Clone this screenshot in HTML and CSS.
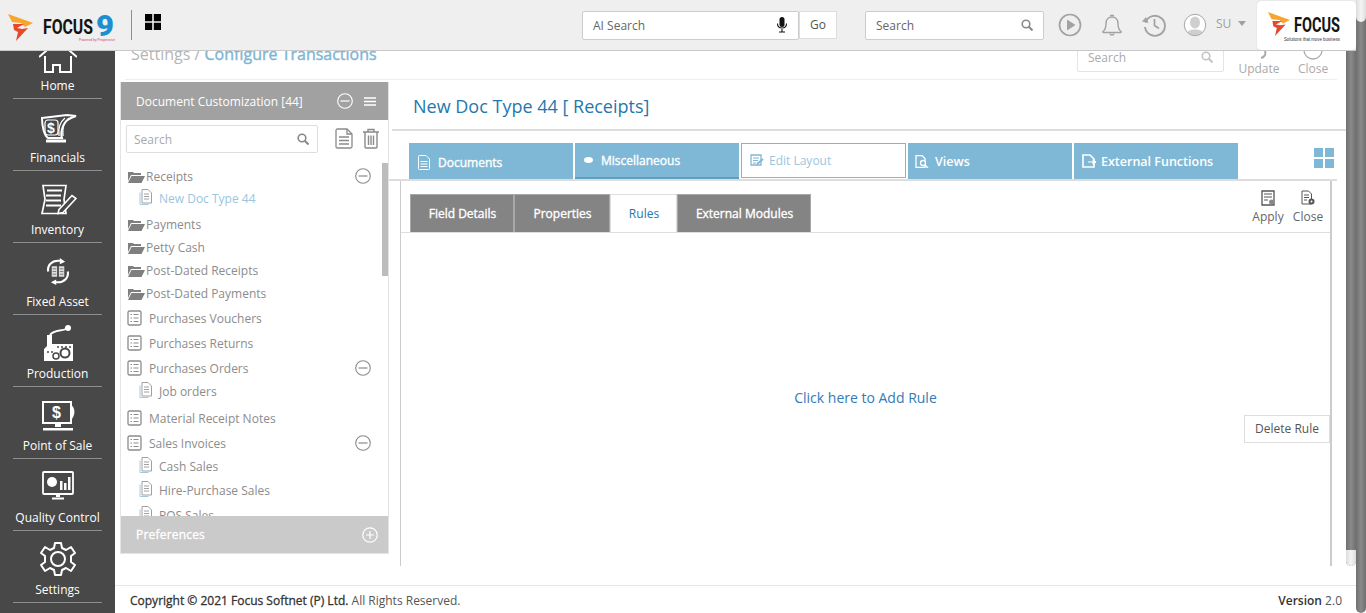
FILE: index.html
```html
<!DOCTYPE html>
<html lang="en">
<head>
<meta charset="utf-8">
<title>Configure Transactions</title>
<link rel="stylesheet" href="styles.css">
</head>
<body>
<svg class="defs" width="0" height="0" aria-hidden="true">
  <symbol id="mark" viewBox="0 0 25 27">
    <path fill="#f7a52c" d="M0 0 L25 9 L17 13 L13 9 L4 8 Z"/>
    <path fill="#e8472a" d="M5 10 L16 10 L9 14 L14 15 L20 14 L8 27 L10 18 L6 16 Z"/>
  </symbol>
  <symbol id="folder" viewBox="0 0 18 13">
    <path fill="#7f7f7f" d="M1 2 L6 2 L7 3 L14 3 L14 5 L4 5 L1 11 Z"/>
    <path fill="#7f7f7f" d="M4.500 6 L18 6 L14.500 13 L1 13 Z"/>
  </symbol>
  <symbol id="list" viewBox="0 0 15 16">
    <rect x="1" y="1" width="13" height="14" rx="1.500" fill="none" stroke="#8c8c8c" stroke-width="1.300"/>
    <path stroke="#8c8c8c" stroke-width="1.100" d="M3.500 4.500h1.500M6.500 4.500h5M3.500 8h1.500M6.500 8h5M3.500 11.500h1.500M6.500 11.500h5"/>
  </symbol>
  <symbol id="page" viewBox="0 0 14 16">
    <path fill="none" stroke="#a8c8dc" d="M1 3.500V15.500H9.500"/>
    <path fill="none" stroke="#a0a0a0" d="M3 .500H9L12.500 4V14H3Z"/>
    <path stroke="#a0a0a0" d="M5 5h5M5 7.500h5M5 10h5"/>
  </symbol>
  <symbol id="minus" viewBox="0 0 16 16">
    <circle cx="8" cy="8" r="7.300" fill="none" stroke="currentColor" stroke-width="1.100"/>
    <path stroke="currentColor" stroke-width="1.200" d="M3.500 8h9"/>
  </symbol>
  <symbol id="lens" viewBox="0 0 12 12">
    <circle cx="5" cy="5" r="3.800" fill="none" stroke="currentColor" stroke-width="1.600"/>
    <path stroke="currentColor" stroke-width="2" d="M7.800 7.800L11.500 11.500"/>
  </symbol>
</svg>

<div class="page">
  <div class="app">
    <header class="topbar">
      <div class="brand">
        <svg class="brand-mark"><use href="#mark"/></svg>
        <svg class="brand-word" viewBox="0 0 74 30" width="74" height="30">
          <text class="word" x="0" y="22" textLength="50" lengthAdjust="spacingAndGlyphs">FOCUS</text>
          <text class="nine" x="53" y="24" textLength="18" lengthAdjust="spacingAndGlyphs">9</text>
          <text class="tiny" x="36" y="29" textLength="36" lengthAdjust="spacingAndGlyphs">Powered by Progressive</text>
        </svg>
      </div>
      <span class="brand-rule"></span>
      <svg class="apps" viewBox="0 0 16 16" width="16" height="16"><path fill="#000" d="M0 0h7.200v7.200H0zM8.800 0H16v7.200H8.800zM0 8.800h7.200V16H0zM8.800 8.800H16V16H8.800z"/></svg>
      <div class="top-search">
        <div class="ai-box">
          <span>AI Search</span>
          <svg viewBox="0 0 12 16" width="12" height="16"><rect x="3.500" y="0" width="5" height="10" rx="2.500" fill="#111"/><path d="M1.500 6.500c0 6 9 6 9 0M6 12v2.500M3 15h6" fill="none" stroke="#111" stroke-width="1.100"/></svg>
        </div>
        <button class="go">Go</button>
      </div>
      <div class="main-search">
        <span>Search</span>
        <svg class="ic-lens"><use href="#lens"/></svg>
      </div>
      <div class="top-icons">
        <svg viewBox="0 0 24 24" width="24" height="24"><circle cx="12" cy="12" r="10.500" fill="none" stroke="#a2a2a2" stroke-width="1.700"/><path d="M9 6.500L17.500 12L9 17.500Z" fill="#a2a2a2"/></svg>
        <svg viewBox="0 0 24 24" width="24" height="24"><path d="M3 18.500c2.500-2 3-4 3-8c0-4 2.500-6.500 6-6.500s6 2.500 6 6.500c0 4 .5 6 3 8c.5.500 0 1-.5 1H3.500c-.5 0-1-.5-.5-1Z" fill="none" stroke="#a2a2a2" stroke-width="1.400"/><path d="M10 2.500h4M10 20.500c.5 2 3.500 2 4 0" fill="none" stroke="#a2a2a2" stroke-width="1.400"/></svg>
        <svg viewBox="0 0 24 24" width="24" height="24"><path d="M3.500 9.500A10 10 0 1 1 3 14" fill="none" stroke="#a2a2a2" stroke-width="1.900"/><path d="M0 8.500L6.500 10L4 4Z" fill="#a2a2a2"/><path d="M12.500 6v6.500l4.500 3" fill="none" stroke="#a2a2a2" stroke-width="1.700"/></svg>
        <svg class="avatar" viewBox="0 0 24 24" width="24" height="24"><defs><clipPath id="av"><circle cx="12" cy="12" r="10.500"/></clipPath></defs><circle cx="12" cy="12" r="10.500" fill="#fff"/><g clip-path="url(#av)" fill="#cfcfcf"><ellipse cx="12" cy="9.500" rx="5" ry="6"/><path d="M3 24c0-6 4-7.500 9-7.500s9 1.500 9 7.500Z"/></g><circle cx="12" cy="12" r="10.700" fill="none" stroke="#a8a8a8"/></svg>
        <span class="user">SU</span><span class="caret"></span>
      </div>
      <div class="top-logo">
        <svg class="logo-mark"><use href="#mark"/></svg>
        <svg class="logo-word" viewBox="0 0 50 26" width="50" height="26">
          <text class="word word-lg" x="3" y="15" textLength="46" lengthAdjust="spacingAndGlyphs">FOCUS</text>
          <text class="tag" x="-7" y="24" textLength="56" lengthAdjust="spacingAndGlyphs">Solutions that move business</text>
        </svg>
      </div>
    </header>

    <div class="below">
      <nav class="sidebar">
        <a class="nav-item nav-first">
          <svg viewBox="0 0 38 38" width="38" height="38"><path d="M0 22L19 5.700L38 22" fill="none" stroke="#fff" stroke-width="2"/><path d="M6 21V37H14V30H21V37H32V21" fill="none" stroke="#fff" stroke-width="2"/></svg>
          <span>Home</span>
        </a>
        <a class="nav-item">
          <svg viewBox="0 0 38 30" width="38" height="30"><path d="M3 5L28 2L37 3C30 5 26 8 24 13C22 18 22 22 23 25H9C5 22 3 13 3 5Z" fill="#484848" stroke="#fff" stroke-width="2"/><path d="M7 28H27" stroke="#fff" stroke-width="3"/><path d="M26 5C21 9 19 15 20 23M30 5C25 9 23 15 24 23" fill="none" stroke="#fff" stroke-width="1.300"/><text class="dollar" x="8" y="20">$</text><rect x="6" y="7" width="13" height="15" rx="3" fill="none" stroke="#fff" stroke-width="1.200"/></svg>
          <span>Financials</span>
        </a>
        <a class="nav-item">
          <svg viewBox="0 0 38 30" width="38" height="31"><path d="M4 1H27L25 15L27 29H3L6 15Z" fill="none" stroke="#fff" stroke-width="1.700"/><path d="M8 6H23M7 11H22M7 16H22M7 21H22" stroke="#fff" stroke-width="2.200"/><path d="M20 25L33 11L37 14L24 28L19 29Z" fill="#484848" stroke="#fff" stroke-width="1.600"/></svg>
          <span>Inventory</span>
        </a>
        <a class="nav-item">
          <svg class="mb8" viewBox="0 0 38 30" width="34" height="27"><path d="M8 15C7 8 12 3 19 3L22 3M30 15C31 22 26 27 19 27L16 27" fill="none" stroke="#fff" stroke-width="2.400"/><path d="M21 0L27 4L21 7ZM17 24L11 27L17 30Z" fill="#fff"/><path d="M12 9h6v12h-6zM20 9h6v12h-6z" fill="#ddd"/><path d="M13 12h4M13 15h4M13 18h4M21 12h4M21 15h4M21 18h4" stroke="#777"/></svg>
          <span>Fixed Asset</span>
        </a>
        <a class="nav-item">
          <svg class="mb4" viewBox="0 0 34 36" width="34" height="36"><path d="M9 10C14 4 20 7 26 3.500" fill="none" stroke="#fff" stroke-width="2"/><circle cx="27" cy="3" r="3" fill="#fff"/><path d="M3 36V24L6 21V10H11V19H32V36Z" fill="#fff"/><path d="M16 22h2M20 22h2M24 22h2M28 22h2M6 27h2M10 27h2" stroke="#484848" stroke-width="1.500"/><circle cx="24" cy="28" r="4.500" fill="#fff" stroke="#484848" stroke-width="2"/><circle cx="15" cy="31" r="3" fill="#fff" stroke="#484848" stroke-width="1.500"/></svg>
          <span>Production</span>
        </a>
        <a class="nav-item">
          <svg viewBox="0 0 38 30" width="38" height="30"><rect x="4" y="1" width="28" height="21" fill="#484848" stroke="#fff" stroke-width="2"/><path d="M32 4C36 6 37 14 32 19Z" fill="#fff"/><path d="M16 23h6v3h-6zM4 27h30v2.500H4z" fill="#fff"/><text class="dollar dollar-pos" x="13" y="17">$</text></svg>
          <span>Point of Sale</span>
        </a>
        <a class="nav-item">
          <svg class="mb8" viewBox="0 0 38 30" width="38" height="30"><rect x="4" y="1" width="30" height="22" rx="1" fill="#484848" stroke="#fff" stroke-width="1.800"/><circle cx="13" cy="11" r="5" fill="#fff"/><path d="M21 10h2.500v9H21zM25 12h2.500v7H25zM29 6h2.500v13H29z" fill="#fff"/><path d="M17 24h4v2h-4zM13 26.500h12v2H13z" fill="#fff"/></svg>
          <span>Quality Control</span>
        </a>
        <a class="nav-item">
          <svg class="mb4" viewBox="0 0 38 36" width="38" height="36"><path d="M16 2H22L23 7L27 9L32 6L36 12L32 15V21L36 24L32 30L27 27L23 29L22 34H16L15 29L11 27L6 30L2 24L6 21V15L2 12L6 6L11 9L15 7Z" fill="none" stroke="#fff" stroke-width="2" stroke-linejoin="round"/><circle cx="19" cy="18" r="7" fill="none" stroke="#fff" stroke-width="2"/></svg>
          <span>Settings</span>
        </a>
      </nav>

      <div class="rightcol">
        <div class="workarea">
          <main class="main">
            <div class="crumbs">
              <h1 class="crumb-title">Settings / <b>Configure Transactions</b></h1>
              <div class="crumb-tools">
                <div class="crumb-search"><span>Search</span><svg class="ic-lens light"><use href="#lens"/></svg></div>
                <div class="crumb-btn crumb-update"><svg viewBox="0 0 20 20" width="20" height="20"><path d="M12 18C16 17 17 14 16 11" fill="none" stroke="#aaa" stroke-width="2"/></svg><span>Update</span></div>
                <div class="crumb-btn"><svg viewBox="0 0 20 20" width="20" height="20"><circle cx="10" cy="10" r="9" fill="none" stroke="#aaa" stroke-width="1.300"/></svg><span>Close</span></div>
              </div>
            </div>

            <div class="split">
              <aside class="panel">
                <div class="panel-head">
                  <span>Document Customization [44]</span>
                  <svg class="ph-minus"><use href="#minus"/></svg>
                  <svg class="ph-menu" viewBox="0 0 12 9" width="12" height="9"><path stroke="#fff" stroke-width="1.500" d="M0 1h12M0 4.500h12M0 8h12"/></svg>
                </div>
                <div class="panel-search">
                  <div class="ps-box"><span>Search</span><svg class="ic-lens"><use href="#lens"/></svg></div>
                  <svg class="ps-doc" viewBox="0 0 18 21" width="18" height="21"><path d="M1 2.500Q1 1 2.500 1H12L17 6V18.500Q17 20 15.500 20H2.500Q1 20 1 18.500Z" fill="none" stroke="#8a8a8a" stroke-width="1.300"/><path d="M4 9h10M4 12.500h10M4 16h10M12 1v5h5" fill="none" stroke="#8a8a8a" stroke-width="1.300"/></svg>
                  <svg class="ps-trash" viewBox="0 0 18 21" width="18" height="21"><path d="M1 4h16M6 4V1.500h6V4M3 4V19Q3 20 4 20H14Q15 20 15 19V4M6.500 7.500V17M9 7.500V17M11.500 7.500V17" fill="none" stroke="#8a8a8a" stroke-width="1.400"/></svg>
                </div>
                <div class="tree">
                  <div class="tree-row folder"><svg class="i-folder"><use href="#folder"/></svg><span>Receipts</span><svg class="tree-minus"><use href="#minus"/></svg></div>
                  <div class="tree-row child active"><svg class="i-page"><use href="#page"/></svg><span>New Doc Type 44</span></div>
                  <div class="tree-row folder gap"><svg class="i-folder"><use href="#folder"/></svg><span>Payments</span></div>
                  <div class="tree-row folder"><svg class="i-folder"><use href="#folder"/></svg><span>Petty Cash</span></div>
                  <div class="tree-row folder"><svg class="i-folder"><use href="#folder"/></svg><span>Post-Dated Receipts</span></div>
                  <div class="tree-row folder"><svg class="i-folder"><use href="#folder"/></svg><span>Post-Dated Payments</span></div>
                  <div class="tree-row doc doc-first"><svg class="i-list"><use href="#list"/></svg><span>Purchases Vouchers</span></div>
                  <div class="tree-row doc"><svg class="i-list"><use href="#list"/></svg><span>Purchases Returns</span></div>
                  <div class="tree-row doc"><svg class="i-list"><use href="#list"/></svg><span>Purchases Orders</span><svg class="tree-minus"><use href="#minus"/></svg></div>
                  <div class="tree-row child"><svg class="i-page"><use href="#page"/></svg><span>Job orders</span></div>
                  <div class="tree-row doc gap"><svg class="i-list"><use href="#list"/></svg><span>Material Receipt Notes</span></div>
                  <div class="tree-row doc"><svg class="i-list"><use href="#list"/></svg><span>Sales Invoices</span><svg class="tree-minus"><use href="#minus"/></svg></div>
                  <div class="tree-row child"><svg class="i-page"><use href="#page"/></svg><span>Cash Sales</span></div>
                  <div class="tree-row child tall-child"><svg class="i-page"><use href="#page"/></svg><span>Hire-Purchase Sales</span></div>
                  <div class="tree-row child tall-child"><svg class="i-page"><use href="#page"/></svg><span>POS Sales</span></div>
                  <span class="tree-thumb"></span>
                </div>
                <div class="panel-foot">
                  <span>Preferences</span>
                  <svg viewBox="0 0 16 16" width="16" height="16"><circle cx="8" cy="8" r="7.200" fill="none" stroke="#fff" stroke-width="1.200"/><path stroke="#fff" stroke-width="1.200" d="M4 8h8M8 4v8"/></svg>
                </div>
              </aside>

              <section class="editor">
                <h2 class="doc-title">New Doc Type 44 [ Receipts]</h2>
                <div class="tabs">
                  <a class="tab tab-doc"><svg viewBox="0 0 12 15" width="12" height="15"><path d="M.5 1.500Q.5.500 1.500.500H8L11.500 4V13.500Q11.500 14.500 10.500 14.500H1.500Q.5 14.500.5 13.500Z" fill="none" stroke="#fff"/><path d="M2.500 6.500h7M2.500 9h7M2.500 11.500h7" stroke="#fff"/></svg>Documents</a>
                  <a class="tab tab-misc"><svg viewBox="0 0 9 6" width="9" height="6"><ellipse cx="4.500" cy="3" rx="4.500" ry="3" fill="#fff"/></svg>Miscellaneous</a>
                  <a class="tab tab-on"><svg viewBox="0 0 14 13" width="14" height="13"><path d="M1 1h10v10H1z" fill="none" stroke="#7fb8d6" stroke-width="1.300"/><path d="M3 4h6M3 6.500h5M3 9h3" stroke="#7fb8d6"/><path d="M7 10l6-5" stroke="#7fb8d6" stroke-width="2"/></svg>Edit Layout</a>
                  <a class="tab tab-views"><svg viewBox="0 0 14 13" width="14" height="13"><path d="M1 .500H7L10 3.500V12.500H1Z" fill="none" stroke="#fff" stroke-width="1.300"/><circle cx="8" cy="8" r="2.500" fill="#7fb8d6" stroke="#fff" stroke-width="1.300"/><path d="M10 10l3 3" stroke="#fff" stroke-width="1.500"/></svg>Views</a>
                  <a class="tab tab-ext"><svg viewBox="0 0 14 14" width="14" height="14"><path d="M1 1H8L12 5V13H1Z" fill="none" stroke="#fff" stroke-width="1.600"/><path d="M6 8h8M11 5.500L14 8L11 10.500Z" stroke="#fff" fill="#fff"/></svg>External Functions</a>
                  <svg class="grid-ic" viewBox="0 0 20 20" width="20" height="20"><path fill="#7fb8d6" d="M0 0h9v9H0zM11 0h9v9h-9zM0 11h9v9H0zM11 11h9v9h-9z"/></svg>
                </div>
                <div class="box">
                  <div class="box-head">
                    <div class="subtabs">
                      <a class="subtab">Field Details</a>
                      <a class="subtab st-prop">Properties</a>
                      <a class="subtab st-on">Rules</a>
                      <a class="subtab st-ext">External Modules</a>
                    </div>
                    <div class="box-tools">
                      <div class="tool"><svg viewBox="0 0 14 16" width="14" height="16"><path d="M1 1H13V15H1Z" fill="none" stroke="#555" stroke-width="1.300"/><path d="M3 4h8M3 7h8M3 10h4" stroke="#555"/><circle cx="10.500" cy="12" r="2.500" fill="#888"/></svg><span>Apply</span></div>
                      <div class="tool"><svg viewBox="0 0 14 16" width="14" height="16"><path d="M1 1H7.500L10.500 4V14H1Z" fill="none" stroke="#555"/><path d="M3 5h5M3 7.500h5M3 10h3" stroke="#555"/><circle cx="10.500" cy="11.500" r="3" fill="#555"/><circle cx="10.500" cy="11.500" r="1" fill="#fff"/></svg><span>Close</span></div>
                    </div>
                  </div>
                  <div class="box-body">
                    <a class="add-rule">Click here to Add Rule</a>
                    <button class="del-rule">Delete Rule</button>
                  </div>
                </div>
              </section>
            </div>
          </main>
          <div class="inner-scroll"><span></span></div>
        </div>
        <footer class="footer">
          <span class="copy"><b>Copyright © 2021 Focus Softnet (P) Ltd.</b> All Rights Reserved.</span>
          <span class="ver"><b>Version</b> 2.0</span>
        </footer>
      </div>
    </div>
  </div>
  <div class="outer-scroll"><span></span></div>
</div>
</body>
</html>
```
FILE: styles.css
```css
* { box-sizing: border-box; }
html, body { margin: 0; height: 100%; overflow: hidden; }
body { font-family: "Open Sans", "Liberation Sans", sans-serif; font-size: 12px; color: #666; background: #fff; }
.defs { display: block; position: absolute; }
a { color: inherit; text-decoration: none; }
svg { display: block; flex: none; }
h1, h2 { margin: 0; font-weight: 400; }

.page { display: flex; height: 613px; }
.app { width: 1356px; flex: none; display: flex; flex-direction: column; }

/* scrollbars */
.outer-scroll { width: 10px; flex: none; background: linear-gradient(90deg, #6f6f6f, #8a8a8a 50%, #6f6f6f); border-radius: 0 0 5px 5px; }
.outer-scroll span { display: block; height: 22px; background: linear-gradient(90deg, #ddd, #f4f4f4 50%, #ddd); border-radius: 0 0 5px 5px; }
.inner-scroll { width: 10px; flex: none; height: 515px; background: linear-gradient(90deg, #6f6f6f, #8a8a8a 50%, #6f6f6f); display: flex; flex-direction: column; justify-content: flex-end; border-radius: 0 0 5px 5px; }
.inner-scroll span { display: block; height: 16px; background: linear-gradient(90deg, #ddd, #f4f4f4 50%, #ddd); border-radius: 0 0 5px 5px; }

/* top bar */
.topbar { height: 51px; flex: none; background: #efefef; border-bottom: 1px solid #c9c9c9; display: flex; align-items: center; position: relative; z-index: 2; }
.brand { display: flex; width: 131px; padding-left: 8px; align-items: flex-start; height: 50px; }
.brand-mark { width: 25px; height: 27px; margin-top: 14px; }
.brand-word { margin: 12px 0 0 10px; overflow: visible; }
.word { font-family: "Roboto", "Liberation Sans", sans-serif; font-weight: 700; font-size: 21px; fill: #141414; }
.word-lg { font-size: 20px; }
.nine { font-family: "Roboto", sans-serif; font-weight: 900; font-size: 29px; fill: #1d8fd0; }
.tiny { font-family: "Liberation Sans", sans-serif; font-size: 4px; fill: #d8436a; }
.tag { font-family: "Liberation Sans", sans-serif; font-size: 5px; fill: #333; }
.brand-rule { width: 1px; height: 30px; background: #8f8f8f; margin-top: -1px; }
.apps { margin: -6px 0 0 13px; }
.top-search { display: flex; margin-left: 421px; }
.ai-box { width: 217px; height: 29px; background: #fff; border: 1px solid #ccc; border-radius: 2px; display: flex; align-items: center; justify-content: space-between; padding: 0 10px 0 10px; font-size: 12px; color: #666; }
.go { width: 38px; height: 28px; margin: 0; background: #fff; border: 1px solid #ddd; font: 12px "Open Sans", sans-serif; color: #555; padding: 0; }
.main-search { width: 179px; height: 29px; margin-left: 28px; background: #fff; border: 1px solid #ccc; border-radius: 2px; display: flex; align-items: center; justify-content: space-between; padding: 0 10px 0 10px; color: #666; }
.ic-lens { width: 12px; height: 12px; color: #888; }
.ic-lens.light { color: #c4c4c4; }
.top-icons { display: flex; align-items: center; margin-left: 14px; width: 198px; }
.top-icons svg + svg { margin-left: 18px; }
.top-icons svg.avatar { margin-left: 17px; }
.user { margin-left: 9px; color: #a0a0a0; font-size: 12px; margin-top: -4px; }
.caret { margin: -3px 0 0 7px; border: 4px solid transparent; border-top: 5px solid #a0a0a0; border-bottom: 0; }
.top-logo { width: 99px; height: 49px; background: #fff; border-radius: 4px; display: flex; padding: 11px 0 0 11px; box-shadow: 0 0 1px #bbb; position: absolute; right: 0; top: 1px; }
.logo-mark { width: 22px; height: 24px; }
.logo-word { margin: 5px 0 0 1px; overflow: visible; }

.below { flex: 1; display: flex; min-height: 0; }

/* sidebar */
.sidebar { width: 115px; flex: none; background: #484848; display: flex; flex-direction: column; align-items: center; overflow: hidden; }
.nav-item { width: 89px; height: 72px; flex: none; border-bottom: 1px solid #8f8f8f; display: flex; flex-direction: column; align-items: center; justify-content: flex-end; color: #fff; font-size: 12px; line-height: 17px; padding-bottom: 4px; }
.nav-item svg { margin-bottom: 6px; }
.nav-item svg.mb8 { margin-bottom: 8px; }
.nav-item svg.mb4 { margin-bottom: 4px; }
.nav-first { height: 48px; overflow: hidden; }
.nav-first svg { margin-bottom: 4px; }
.dollar { font: 700 14px "Liberation Sans", sans-serif; fill: #fff; }
.dollar-pos { font-size: 16px; }

.rightcol { flex: 1; min-width: 0; display: flex; flex-direction: column; }
.workarea { flex: 1; display: flex; min-height: 0; }
.main { flex: 1; min-width: 0; }

/* breadcrumb */
.crumbs { height: 29px; margin: 0 9px 0 10px; border-bottom: 1px solid #eee; display: flex; justify-content: space-between; align-items: flex-end; overflow: hidden; }
.crumb-title { font-size: 16px; line-height: 24px; color: #b5b5b5; margin: 0 0 13px 6px; flex: none; }
.crumb-title b { font-weight: 400; color: #7fb5d3; -webkit-text-stroke: .4px #7fb5d3; }
.crumb-tools { display: flex; align-items: flex-end; flex: none; color: #aaa; }
.crumb-search { width: 147px; height: 28px; margin: 0 14px 7px 0; background: #fff; border: 1px solid #e4e4e4; border-radius: 2px; display: flex; align-items: center; justify-content: space-between; padding: 0 10px 2px 10px; color: #aaa; }
.crumb-btn { display: flex; flex-direction: column; align-items: center; width: 30px; line-height: 16px; margin-right: 9px; padding-bottom: 2px; }
.crumb-update { width: 42px; margin-right: 18px; }
.crumb-btn svg { margin-bottom: 1px; }

.split { display: flex; height: 486px; }

/* left panel */
.panel { width: 269px; height: 472px; margin: 2px 0 0 5px; border: 1px solid #e4e4e4; border-top: 0; display: flex; flex-direction: column; flex: none; }
.panel-head { height: 38px; flex: none; background: #a1a1a1; color: #fff; display: flex; align-items: center; padding: 0 12px 0 15px; }
.panel-head span { flex: 1; }
.ph-minus { width: 16px; height: 16px; color: #fff; margin-right: 11px; }
.panel-search { height: 38px; flex: none; padding: 5px 0 0 5px; display: flex; align-items: flex-start; }
.ps-box { width: 192px; height: 28px; border: 1px solid #ddd; border-radius: 2px; display: flex; align-items: center; justify-content: space-between; padding: 0 8px 0 7px; color: #aaa; }
.ps-doc { margin: 3px 0 0 17px; }
.ps-trash { margin: 3px 0 0 9px; }
.tree { flex: 1; min-height: 0; position: relative; overflow: hidden; padding: 7px 0 0 6px; color: #8c8c8c; }
.tree-row { display: flex; align-items: center; }
.tree-row.folder { height: 23px; }
.tree-row.doc { height: 25px; }
.tree-row.doc-first { margin-top: 1px; }
.tree-row.child { height: 21px; padding: 0 0 1px 12px; }
.tree-row.tall-child { height: 25px; padding-top: 2px; }
.tree-row.gap { margin-top: 4px; }
.tree-row.active { color: #9cc5dd; }
.tree-row > span { flex: none; }
.i-folder { width: 18px; height: 13px; margin-right: 1px; }
.i-list { width: 15px; height: 16px; margin: -2px 7px 0 0; }
.i-page { width: 14px; height: 16px; margin: -2px 6px 0 0; }
.tree-minus { width: 16px; height: 16px; color: #8a8a8a; margin: -2px 0 0 auto; position: absolute; right: 17px; }
.tree-thumb { position: absolute; right: 0; top: 5px; width: 6px; height: 113px; background: #bcbcbc; }
.panel-foot { height: 37px; flex: none; background: #cacaca; color: #fff; display: flex; align-items: center; justify-content: space-between; padding: 0 10px 0 15px; font-size: 12px; letter-spacing: .2px; -webkit-text-stroke: .3px #fff; }

/* right */
.editor { flex: 1; min-width: 0; }
.doc-title { height: 50px; margin: 1px 0 0 3px; padding: 12px 0 0 21px; font-size: 18px; line-height: 26px; color: #1f78ac; border-bottom: 2px solid #ddd; }
.tabs { height: 50px; padding: 12px 0 0 20px; margin-right: 9px; display: flex; align-items: stretch; gap: 2px; border-bottom: 2px solid #ddd; }
.tab { width: 164px; height: 36px; background: #7fb8d6; color: #fff; font-size: 12.500px; font-weight: 600; display: flex; align-items: center; gap: 8px; padding-left: 9px; }
.tab-doc { font-size: 12px; font-weight: 400; -webkit-text-stroke: .35px #fff; padding-top: 2px; }
.tab-misc { font-size: 12px; font-weight: 400; -webkit-text-stroke: .35px #fff; border-bottom: 2px solid #5f9fc0; }
.tab-on { width: 165px; background: #fff; border: 1px solid #7fb8d6; color: #9cc5dd; font-weight: 400; font-size: 12px; height: 35px; gap: 5px; padding-left: 8px; }
.tab-views { gap: 6px; padding-left: 7px; }
.tab-ext { gap: 5px; padding-left: 8px; }
.grid-ic { margin: 5px 3px 0 auto; }
.box { width: 932px; height: 385px; margin-left: 11px; border-left: 1px solid #ccc; border-right: 2px solid #ccc; display: flex; flex-direction: column; }
.box-head { height: 52px; flex: none; border-bottom: 1px solid #ddd; display: flex; justify-content: space-between; align-items: flex-end; padding-left: 9px; }
.subtabs { display: flex; }
.subtab { height: 38px; background: #848484; color: #fff; font-weight: 400; -webkit-text-stroke: .35px #fff; border: 1px solid #a8a8a8; border-bottom: 0; display: flex; align-items: center; justify-content: center; width: 104px; padding-left: 1px; }
.st-prop { width: 96px; }
.st-on { width: 67px; background: #fff; color: #1f78ac; -webkit-text-stroke: 0; border-color: #ddd; }
.st-ext { width: 134px; }
.box-tools { display: flex; gap: 8px; padding: 0 6px 7px 0; color: #666; }
.tool { display: flex; flex-direction: column; align-items: center; line-height: 16px; width: 32px; }
.tool svg { margin-bottom: 3px; }
.box-body { flex: 1; display: grid; grid-template-columns: 1fr auto 1fr; align-items: start; }
.add-rule { grid-column: 2; margin-top: 155px; font-size: 14px; line-height: 20px; color: #337ab7; }
.del-rule { grid-column: 3; justify-self: end; margin: 182px 0 0 0; width: 86px; height: 28px; padding: 0 0 2px; background: #fff; border: 1px solid #ddd; font: 12px "Open Sans", sans-serif; color: #555; }

/* footer */
.footer { height: 28px; flex: none; border-top: 1px solid #e7e7e7; display: flex; justify-content: space-between; align-items: center; padding: 1px 14px 0 15px; color: #555; font-size: 12px; }
.copy b { font-weight: 400; color: #333; -webkit-text-stroke: .3px #333; }
.ver b { font-weight: 600; color: #333; }
```
